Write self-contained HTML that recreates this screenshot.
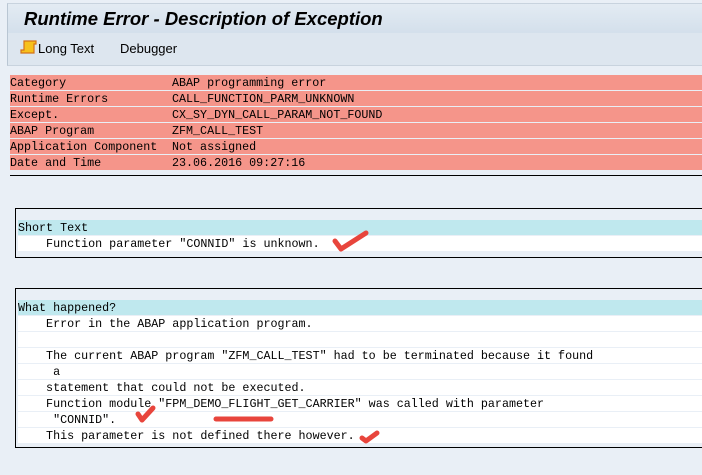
<!DOCTYPE html>
<html><head><style>
body{margin:0;width:702px;height:475px;overflow:hidden;background:#e9eff6;font-family:"Liberation Mono",monospace;font-size:11.7px;position:relative}
.title{position:absolute;left:7px;top:3px;width:700px;height:30px;background:linear-gradient(#e3ebf3,#d3dfeb);border-left:1px solid #b9c6d3;border-top:1px solid #c8d3de}
.title span{position:absolute;left:16px;top:4px;font:italic bold 18.5px "Liberation Sans",sans-serif;color:#000}
.tb{position:absolute;left:7px;top:33px;width:700px;height:32px;background:#dde6ef;border-left:1px solid #b9c6d3;border-bottom:1px solid #c8d3de;font:13px "Liberation Sans",sans-serif}
.row{position:absolute;left:10px;width:692px;height:15px;background:#f5958a;line-height:16px;white-space:pre}
.row b{font-weight:normal;position:absolute;left:162px}
.box{position:absolute;left:15px;width:700px;border:1px solid #000;background:#e9eff6}
.l{position:absolute;left:2px;width:700px;height:15px;line-height:16px;white-space:pre;background:#fff}
.h{background:#bfe8ee}
</style></head><body>
<div class="title"><span>Runtime Error - Description of Exception</span></div>
<div class="tb">
<svg style="position:absolute;left:12px;top:7px" width="17" height="15" viewBox="0 0 17 15"><path d="M4 1h12v3h-2v9H1v-3h3z" fill="#f7c11c" stroke="#d4731a" stroke-width="1.2"/></svg>
<span style="position:absolute;left:30px;top:8px">Long Text</span>
<span style="position:absolute;left:112px;top:8px">Debugger</span>
</div>
<div class="row" style="top:75px">Category<b>ABAP programming error</b></div>
<div class="row" style="top:91px">Runtime Errors<b>CALL_FUNCTION_PARM_UNKNOWN</b></div>
<div class="row" style="top:107px">Except.<b>CX_SY_DYN_CALL_PARAM_NOT_FOUND</b></div>
<div class="row" style="top:123px">ABAP Program<b>ZFM_CALL_TEST</b></div>
<div class="row" style="top:139px">Application Component<b>Not assigned</b></div>
<div class="row" style="top:155px">Date and Time<b>23.06.2016 09:27:16</b></div>
<div style="position:absolute;left:10px;top:175px;width:692px;height:1px;background:#000"></div>

<div class="box" style="top:208px;height:48px">
<div class="l h" style="top:11px">Short Text</div>
<div class="l" style="top:27px">    Function parameter "CONNID" is unknown.</div>
</div>
<div class="box" style="top:288px;height:158px">
<div class="l h" style="top:11px">What happened?</div>
<div class="l" style="top:27px">    Error in the ABAP application program.</div>
<div class="l" style="top:43px"> </div>
<div class="l" style="top:59px">    The current ABAP program "ZFM_CALL_TEST" had to be terminated because it found</div>
<div class="l" style="top:75px">     a</div>
<div class="l" style="top:91px">    statement that could not be executed.</div>
<div class="l" style="top:107px">    Function module "FPM_DEMO_FLIGHT_GET_CARRIER" was called with parameter</div>
<div class="l" style="top:123px">     "CONNID".</div>
<div class="l" style="top:139px">    This parameter is not defined there however.</div>
</div>
<svg style="position:absolute;left:0;top:0" width="702" height="475">
<g fill="none" stroke="#e8453c" stroke-linecap="round" stroke-linejoin="round" stroke-width="5">
<path d="M335 241l6 8 25-16"/>
<path d="M138 414l4 6 11-12"/>
<path d="M216 419h55"/>
<path d="M362 438l4 3 11-8"/>
</g></svg>
</body></html>
